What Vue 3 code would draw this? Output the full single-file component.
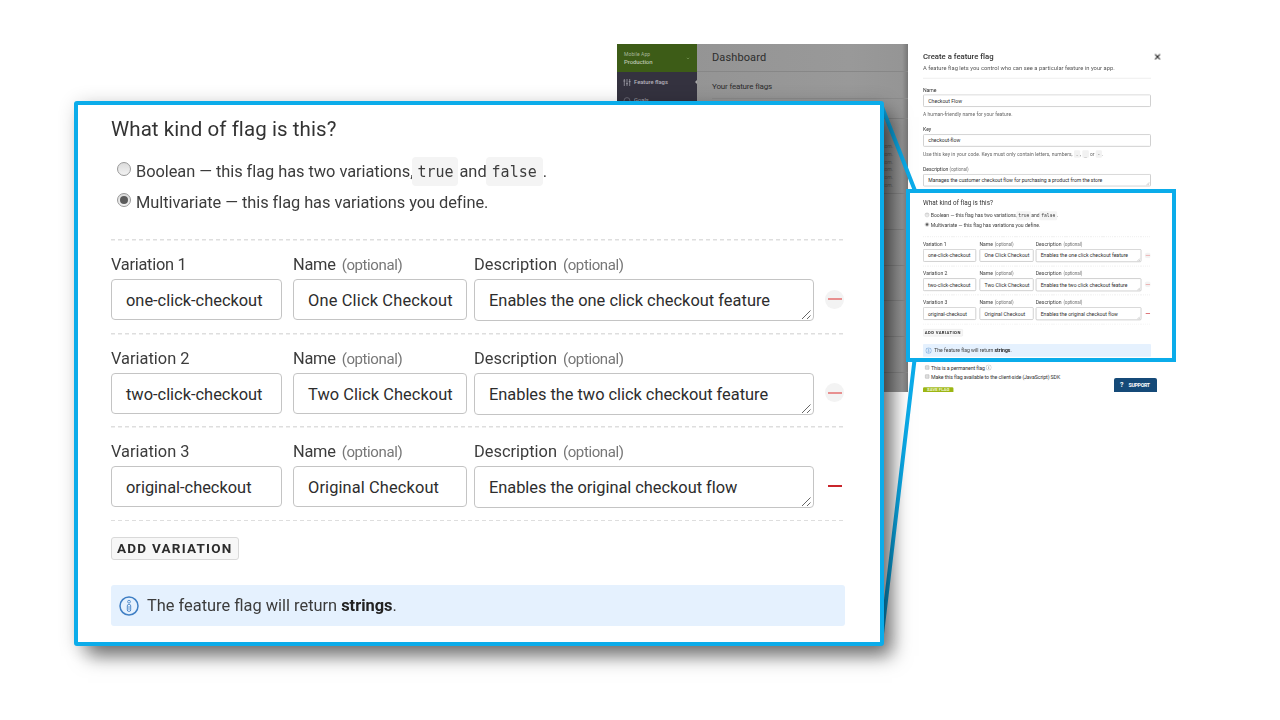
<script setup>
// v-fit="n": tracks a line of text so that it spans n pixels
const vFit = {
  mounted(el, { value }) {
    const gap = (value - el.offsetWidth) / el.textContent.length
    el.style.letterSpacing = gap.toFixed(3) + 'px'
  },
}

const views = ['zoomed', 'mini']
const variations = [
  { label: 'Variation 1', lw: 75, key: 'one-click-checkout', kw: 137, name: 'One Click Checkout', nw: 145, text: 'Enables the one click checkout feature', tw: 281, faded: true },
  { label: 'Variation 2', lw: 78, key: 'two-click-checkout', kw: 136, name: 'Two Click Checkout', nw: 145, text: 'Enables the two click checkout feature', tw: 279, faded: true },
  { label: 'Variation 3', lw: 78, key: 'original-checkout', kw: 126, name: 'Original Checkout', nw: 131, text: 'Enables the original checkout flow', tw: 248, faded: false },
]
</script>

<template>
  <div class="stage">
    <div class="shot">
      <div class="dashboard">
        <div class="side">
          <div class="env">
            <div><span v-fit="26">Mobile App</span><b v-fit="28">Production</b></div>
            <svg width="4" height="3" viewBox="0 0 4 3"><path d="M.8 .8 2 2 3.2 .8" fill="none" stroke="#7f9d5c" stroke-width=".7" /></svg>
          </div>
          <div class="nav on">
            <svg width="8" height="7" viewBox="0 0 8 7"><path d="M1.3 0v7M4 0v7M6.7 0v7M.3 2h2M3 4.7h2M5.7 2.6h2" fill="none" stroke="#aaa9b2" stroke-width=".7" /></svg>
            <b v-fit="34">Feature flags</b><i class="notch"></i>
          </div>
          <div class="nav goals">
            <svg width="8" height="7" viewBox="0 0 8 7"><circle cx="4" cy="3.5" r="2.9" fill="none" stroke="#85848f" stroke-width=".6" /></svg>
            <span v-fit="15">Goals</span>
          </div>
        </div>
        <div class="main">
          <div class="bar"><span v-fit="54">Dashboard</span></div>
          <div class="sub"><span v-fit="60">Your feature flags</span></div>
          <div class="filter"></div>
          <div class="events"><span v-for="n in 6" :key="n">com.</span></div>
          <div v-for="n in 5" :key="n" class="line"></div>
        </div>
      </div>
      <div class="drawer">
        <div class="drawer-top">
          <div class="heading"><span v-fit="227">Create a feature flag</span>
            <svg width="20" height="20" viewBox="0 0 18 18"><path d="M2 2 16 16M16 2 2 16" fill="none" stroke="#222" stroke-width="3.2" /></svg>
          </div>
          <div class="lead"><span v-fit="617">A feature flag lets you control who can see a particular feature in your app.</span></div>
          <div class="field first"><label><span v-fit="43">Name</span></label>
            <div class="input"><span v-fit="109">Checkout Flow</span></div>
            <p><span v-fit="288">A human-friendly name for your feature.</span></p></div>
          <div class="field"><label><span v-fit="27">Key</span></label>
            <div class="input"><span v-fit="103">checkout-flow</span></div>
            <p><span v-fit="482">Use this key in your code. Keys must only contain letters, numbers,</span> <code>.</code>, <code>_</code> or <code>-</code>.</p></div>
          <div class="field"><label><span v-fit="82">Description</span> <small v-fit="61">(optional)</small></label>
            <div class="input"><span v-fit="560">Manages the customer checkout flow for purchasing a product from the store</span>
              <svg class="grip" width="12" height="12" viewBox="0 0 12 12"><path d="M1 11 11 1M6 11 11 6" stroke="#666" fill="none" /></svg></div></div>
        </div>
        <div class="drawer-end">
          <div><i class="check"></i><span v-fit="173">This is a permanent flag</span>
            <svg width="19" height="19" viewBox="0 0 20 20"><circle cx="10" cy="10" r="9" fill="none" stroke="#777" /><path d="M10 5v2M10 8.5v7" stroke="#777" stroke-width="2" /></svg></div>
          <div><i class="check"></i><span v-fit="415">Make this flag available to the client-side (JavaScript) SDK</span></div>
          <button class="save">SAVE FLAG</button>
        </div>
        <div class="support"><b>?</b><b v-fit="21">SUPPORT</b></div>
      </div>
    </div>

    <svg class="links" width="1280" height="720" viewBox="0 0 1280 720">
      <path d="M882 107 915.5 192M914.500 360 882 634" fill="none" stroke="#0bacea" stroke-width="4" />
    </svg>

    <div v-for="view in views" :key="view" :class="['panel', view]">
      <div class="form">
        <div class="question"><span v-fit="225">What kind of flag is this?</span></div>
        <div class="choice"><i class="radio"></i><span v-fit="277">Boolean — this flag has two variations,</span><code>true</code><span class="and" v-fit="27">and</span><code class="wide">false</code><span>.</span></div>
        <div class="choice"><i class="radio picked"></i><span v-fit="351">Multivariate — this flag has variations you define.</span></div>
        <div class="rows">
          <div v-for="v in variations" :key="v.label" class="row">
            <div class="cell key"><label><span v-fit="v.lw">{{ v.label }}</span></label><div class="input"><span v-fit="v.kw">{{ v.key }}</span></div></div>
            <div class="cell name"><label><span v-fit="43">Name</span><small v-fit="61">(optional)</small></label><div class="input"><span v-fit="v.nw">{{ v.name }}</span></div></div>
            <div class="cell desc"><label><span v-fit="83">Description</span><small v-fit="61">(optional)</small></label>
              <div class="input"><span v-fit="v.tw">{{ v.text }}</span>
                <svg class="grip" width="11" height="11" viewBox="0 0 11 11"><path d="M1 10 9.500 1.500M6 10 9.500 6.500" stroke="#666" fill="none" /></svg></div></div>
            <i :class="['minus', { faded: v.faded }]"></i>
          </div>
        </div>
        <button class="add"><span v-fit="116">ADD VARIATION</span></button>
        <div class="info">
          <svg width="20" height="20" viewBox="0 0 20 20" fill="none" stroke="#3f7fc4"><circle cx="10" cy="10" r="9" stroke-width="1.500" /><circle cx="10" cy="5.700" r="1.400" stroke-width=".8" /><rect x="8.300" y="8.400" width="3.400" height="7" rx="1.500" stroke-width=".9" /><path d="M10 10v4" stroke-width=".7" /></svg>
          <span v-fit="190">The feature flag will return</span><b v-fit="51">strings</b><span>.</span>
        </div>
      </div>
    </div>
  </div>
</template>

<style>
body { background: #fff; overflow: hidden; }
</style>

<style scoped>
* { box-sizing: border-box; }
.stage { position: relative; width: 1280px; height: 720px; overflow: hidden; background: #fff; font-family: Roboto, "Open Sans", sans-serif; color: #3c3c3c; white-space: nowrap; }
span, small, b { display: inline-block; }
button { font-family: inherit; }

.shot { position: absolute; left: 617px; top: 44px; width: 548px; height: 348px; display: flex; overflow: hidden; }
.dashboard { width: 291px; display: flex; background: linear-gradient(90deg, #929292, #999 80%, #959595 98%, #777); }
.side { width: 80px; background: #34323f; color: #a9a9b0; font-size: 6px; }
.env { height: 28px; background: #3d5c17; color: #a9b89a; padding: 0 7px; display: flex; align-items: center; justify-content: space-between; font-size: 5px; }
.env > div { display: flex; flex-direction: column; align-items: flex-start; line-height: 8px; }
.env b { font-weight: 500; font-size: 6px; color: #b8c3ac; }
.nav { position: relative; height: 18px; padding-left: 6px; display: flex; align-items: center; gap: 3px; font-size: 5.8px; }
.nav.on { height: 20px; color: #b4b3bb; }
.nav.goals { height: 16px; }
.nav b { font-weight: 500; }
.notch { position: absolute; right: 0; top: 8px; border: 2px solid transparent; border-right-color: #aaa; border-left: 0; }
.main { flex: 1; color: #2d2d2d; }
.bar { height: 28px; border-bottom: 1px solid #878787; padding-left: 15px; font-size: 11px; line-height: 28px; }
.sub { height: 27px; margin-left: 15px; border-bottom: 1px solid #8b8b8b; font-size: 8px; line-height: 29px; }
.filter { height: 20px; border-bottom: 1px solid #858585; }
.events { height: 75px; padding: 24px 15px 0 0; border-bottom: 1px solid #858585; display: flex; flex-direction: column; align-items: flex-end; font-size: 5px; line-height: 7.8px; color: #666; }
.line { height: 35.8px; border-bottom: 1px solid #858585; }

.drawer { position: relative; flex: 1; background: #fff; overflow: hidden; }
.drawer-top, .drawer-end { position: absolute; left: 15px; width: 734px; transform: scale(.3106); transform-origin: 0 0; font-size: 16.500px; color: #333; }
.drawer-top { top: 0; }
.heading { height: 60px; padding-top: 20px; font-size: 25px; line-height: 40px; color: #333; position: relative; font-weight: 500; }
.heading svg { position: absolute; left: 745px; top: 31px; }
.lead { height: 51px; line-height: 38px; border-bottom: 2px solid #e4e4e4; color: #555; font-size: 18.500px; }
.field { height: 128px; }
.field.first { height: 153px; padding-top: 25px; }
.field label { display: block; height: 26px; line-height: 24px; }
.field p { margin: 0; line-height: 46px; color: #666; font-size: 16px; }
.field code { font: 14px "DejaVu Sans Mono", monospace; background: #f2f2f2; padding: 4px 6px; border-radius: 4px; }
.drawer-top .input { border: 3px solid #ccc; line-height: 37px; padding-left: 14px; }
.drawer-end { top: 319px; font-size: 17px; line-height: 30px; }
.drawer-end div { display: flex; align-items: center; padding-left: 7px; height: 29px; }
.drawer-end svg { margin-left: 3px; }
.check { width: 13px; height: 13px; border: 1.500px solid #888; border-radius: 2px; background: #ddd; margin-right: 6px; }
.save { width: 98px; height: 40px; margin-top: 20px; border: 0; border-radius: 4px 4px 0 0; background: #9cb614; color: #eff5d2; font-weight: 700; font-size: 14px; padding: 0; line-height: 14px; display: flex; justify-content: center; align-items: flex-start; }
.support { position: absolute; left: 206px; top: 334px; width: 43px; height: 14px; border-radius: 2px 2px 0 0; background: #154a78; color: #fff; font-size: 5.200px; display: flex; align-items: center; padding-left: 6px; gap: 5px; }
.support b:first-child { font-size: 7px; }

.links { position: absolute; left: 0; top: 0; }

.panel { position: absolute; background: #fff; border: 4px solid #0bacea; }
.zoomed { left: 74px; top: 101px; width: 810px; height: 545px; border-radius: 3px; padding-left: 33px; box-shadow: 11px 13px 18px -3px rgba(0, 0, 0, .5), 3px 3px 20px rgba(0, 0, 0, .2); }
.mini { left: 906px; top: 189px; width: 270px; height: 173px; padding: 1.500px 0 0 13px; }
.mini .form { transform: scale(.3106); transform-origin: 0 0; }
.mini .input { border-color: #b4b4b4; border-width: 2px; line-height: 39px; }
.form { width: 734px; height: 522px; font-size: 16.400px; }
.question { height: 51px; font-size: 20.500px; line-height: 48px; color: #333; }
.choice { height: 31px; display: flex; align-items: center; padding-left: 6px; }
.radio { width: 14px; height: 14px; border: 1px solid #999; border-radius: 50%; background: linear-gradient(#dcdcdc, #f2f2f2); margin: 0 5px 5px 0; display: grid; place-items: center; }
.picked::after { content: ""; width: 8px; height: 8px; border-radius: 50%; background: #5b5b5b; }
.choice code { width: 46px; height: 29px; border-radius: 4px; background: #f4f4f4; font: 15px/30px "DejaVu Sans Mono", monospace; text-align: center; margin-left: -1px; }
.choice code.wide { width: 57px; }
.choice .and { margin-left: 1px; }
.rows { margin-top: 21px; height: 282px; background: repeating-linear-gradient(90deg, #dedede 0 4px, transparent 4px 7px) 0 100% / 100% 1.500px no-repeat; }
.row { height: 93.700px; display: flex; background: repeating-linear-gradient(90deg, #dedede 0 4px, transparent 4px 7px) 0 0 / 100% 1.500px no-repeat; }
.cell label { display: block; height: 40px; padding-top: 11px; line-height: 30px; }
small { font-size: 15px; color: #777; }
.cell small { margin-left: 6px; }
.input { position: relative; height: 41px; border: 1.500px solid #c4c4c4; border-radius: 4px; padding-left: 14px; line-height: 41px; color: #2d2d2d; background: #fff; }
.key { width: 171px; margin-right: 11px; }
.name { width: 174px; margin-right: 7px; }
.desc { width: 340px; }
.desc .input { height: 42px; }
.grip { position: absolute; right: 1px; bottom: 0; }
.minus { width: 19px; height: 19px; border-radius: 50%; margin: 50.500px 0 0 11px; background: linear-gradient(#c9252b, #c9252b) center / 14px 2px no-repeat; }
.minus.faded { background: linear-gradient(#e89090, #e89090) center / 14px 2px no-repeat, #f3f3f3; }
.add { display: block; margin-top: 16px; width: 128px; height: 23px; padding: 0 0 0 5px; border: 1.500px solid #d9d9d9; border-radius: 3px; background: #f7f7f7; font-size: 13.500px; line-height: 19px; font-weight: 700; color: #2c2c2c; text-align: left; }
.info { margin-top: 25px; height: 41px; border-radius: 3px; background: #e5f1fe; padding-left: 8px; display: flex; align-items: center; }
.info svg { margin-right: 8px; }
.info b { margin-left: 4px; color: #222; font-weight: 700; }
</style>
